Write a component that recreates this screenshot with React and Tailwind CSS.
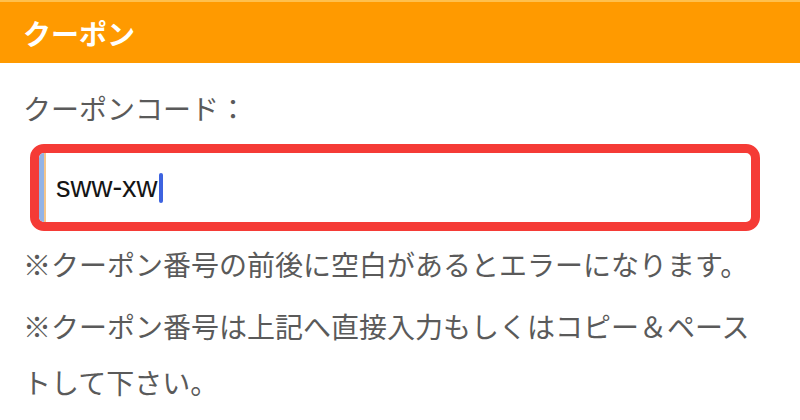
export default function App() {
  return (
    <div
      className="w-[800px] h-[420px] bg-white overflow-hidden"
      style={{ fontFamily: '"Noto Sans CJK JP", "Noto Sans", sans-serif' }}
    >
      {/* Header */}
      <div className="h-[63px] bg-[#ff9a00] border-t-2 border-[#ffc04d] flex items-center pl-[23px]">
        <h2 className="text-[28px] font-bold text-white leading-none">クーポン</h2>
      </div>

      <div className="pl-[23px] pr-[30px]">
        {/* Label */}
        <p className="pt-[25px] text-[28px] leading-[40px] text-[#5a5a5a]">クーポンコード：</p>

        {/* Input */}
        <div className="mt-[16px] ml-[7px] w-[730px] h-[87px] border-[9px] border-[#f53b36] rounded-[14px] flex overflow-hidden">
          <div className="w-[5px] bg-[#93b3e6]" />
          <div className="w-[2px] bg-[#f5c58a]" />
          <div className="flex-1 flex items-center pl-[10px]">
            <span
              className="text-[29px] leading-none text-[#151515]"
              style={{ fontFamily: '"Liberation Sans", Arial, sans-serif' }}
            >
              sww-xw
            </span>
            <span className="ml-[1px] w-[4px] h-[30px] rounded-full bg-[#3d63e0]" />
          </div>
        </div>

        {/* Notes */}
        <div className="mt-[5px] text-[28px] leading-[56px] text-[#5a5a5a]">
          <p>※クーポン番号の前後に空白があるとエラーになります。</p>
          <p className="mt-[6px]">※クーポン番号は上記へ直接入力もしくはコピー＆ペーストして下さい。</p>
        </div>
      </div>
    </div>
  );
}
